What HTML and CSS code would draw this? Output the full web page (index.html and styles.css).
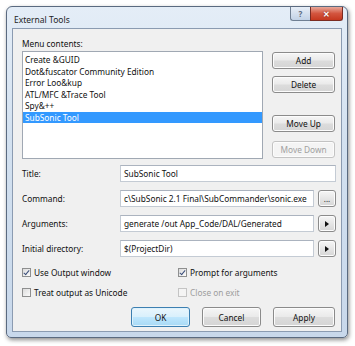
FILE: index.html
```html
<!DOCTYPE html>
<html>
<head>
<meta charset="utf-8">
<link rel="stylesheet" href="styles.css">
</head>
<body>
<div class="window">
  <div class="titlebar">
    <span class="title">External Tools</span>
    <div class="caption-btns">
      <span class="cb help">?</span>
      <span class="cb close">✕</span>
    </div>
  </div>
  <div class="client">
    <div class="label menu-label">Menu contents:</div>
    <div class="top">
      <div class="listbox">
        <div class="item">Create &amp;GUID</div>
        <div class="item">Dot&amp;fuscator Community Edition</div>
        <div class="item">Error Loo&amp;kup</div>
        <div class="item">ATL/MFC &amp;Trace Tool</div>
        <div class="item">Spy&amp;++</div>
        <div class="item selected">SubSonic Tool</div>
      </div>
      <div class="side">
        <button class="btn">Add</button>
        <button class="btn">Delete</button>
        <button class="btn move-up">Move Up</button>
        <button class="btn disabled">Move Down</button>
      </div>
    </div>
    <div class="form">
      <div class="label">Title:</div>
      <div class="field wide">SubSonic Tool</div>
      <div class="label">Command:</div>
      <div class="fieldrow"><div class="field">c\SubSonic 2.1 Final\SubCommander\sonic.exe</div><button class="sbtn">...</button></div>
      <div class="label">Arguments:</div>
      <div class="fieldrow"><div class="field">generate /out App_Code/DAL/Generated</div><button class="sbtn arrow"><span class="tri"></span></button></div>
      <div class="label">Initial directory:</div>
      <div class="fieldrow"><div class="field">$(ProjectDir)</div><button class="sbtn arrow"><span class="tri"></span></button></div>
    </div>
    <div class="checks">
      <label class="chk"><span class="box checked"></span>Use Output window</label>
      <label class="chk"><span class="box checked"></span>Prompt for arguments</label>
      <label class="chk"><span class="box"></span>Treat output as Unicode</label>
      <label class="chk disabled"><span class="box"></span>Close on exit</label>
    </div>
    <div class="bottom">
      <button class="btn dlg default">OK</button>
      <button class="btn dlg">Cancel</button>
      <button class="btn dlg apply">Apply</button>
    </div>
  </div>
</div>
</body>
</html>
```

FILE: styles.css
```css
html, body {
  margin: 0;
  padding: 0;
  background: #ffffff;
}
body {
  width: 355px;
  height: 346px;
  font-family: "Noto Sans", "Open Sans", sans-serif;
  font-size: 8.3px;
  color: #111;
}
.window {
  margin: 6px 0 0 6px;
  width: 342px;
  height: 332px;
  box-sizing: border-box;
  border: 1px solid #5a6a80;
  border-radius: 6px 6px 5px 5px;
  background: linear-gradient(180deg, #e4edf7 0%, #d3e1f0 40%, #c8d8eb 100%);
  box-shadow: 1px 2px 4px rgba(0,0,0,0.45);
  padding: 0 5px 5px 5px;
  display: flex;
  flex-direction: column;
}
.titlebar {
  height: 21px;
  display: flex;
  align-items: flex-start;
  justify-content: space-between;
}
.title {
  font-size: 8.5px;
  margin-top: 7px;
  margin-left: 2px;
  color: #1e1e1e;
}
.caption-btns {
  display: flex;
  margin-right: -1px;
}
.cb {
  height: 13px;
  display: flex;
  align-items: center;
  justify-content: center;
  font-size: 8px;
  font-weight: bold;
  color: #fff;
  border: 1px solid #6f7f93;
  border-top: none;
}
.help {
  width: 19px;
  border-radius: 0 0 0 3px;
  background: linear-gradient(180deg, #e7eef7, #c2d2e6);
  color: #5b6b80;
  border-right: none;
}
.close {
  width: 31px;
  border-radius: 0 0 3px 0;
  background: linear-gradient(180deg, #e9a99a 0%, #d3553f 50%, #c5381f 100%);
  border-color: #7a2b22;
  text-shadow: 0 0 2px #6a1a10;
}
.client {
  flex: 1;
  background: #f0f0f0;
  border: 1px solid #8b9bb1;
  padding: 9px 6px 0 9px;
  display: flex;
  flex-direction: column;
}
.label {
  color: #111;
}
.menu-label {
  height: 13px;
}
.top {
  display: flex;
  gap: 9px;
}
.listbox {
  width: 242px;
  height: 108px;
  box-sizing: border-box;
  background: #fff;
  border: 1px solid #a0a8b3;
  padding-top: 2px;
}
.item {
  height: 11.5px;
  line-height: 11.5px;
  padding-left: 2px;
}
.item.selected {
  background: #3399ff;
  color: #fff;
}
.side {
  display: flex;
  flex-direction: column;
  width: 63px;
  padding-top: 1px;
}
.btn {
  font-family: inherit;
  font-size: 8.3px;
  color: #111;
  height: 17px;
  padding: 0;
  border: 1px solid #8b8b8b;
  border-radius: 3px;
  background: linear-gradient(180deg, #f6f6f6 0%, #eaeaea 48%, #dcdcdc 52%, #d5d5d5 100%);
  box-shadow: inset 0 0 0 1px #fcfcfc;
}
.side .btn {
  margin-bottom: 7px;
}
.side .btn:last-child {
  margin-bottom: 0;
}
.side .move-up {
  margin-top: 15px;
  margin-bottom: 9px;
}
.btn.disabled {
  color: #a0a0a0;
  border-color: #c3c3c3;
  background: #f4f4f4;
}
.form {
  margin-top: 6px;
  display: grid;
  grid-template-columns: 98px 216px;
  grid-auto-rows: 17px;
  row-gap: 8px;
  align-items: center;
}
.field {
  height: 17px;
  box-sizing: border-box;
  background: #fff;
  border: 1px solid #c4cbd4;
  border-top-color: #abb3bf;
  padding: 0 3px;
  line-height: 15px;
  white-space: nowrap;
  overflow: hidden;
  flex: 1;
}
.fieldrow {
  display: flex;
  gap: 4px;
}
.sbtn {
  width: 18px;
  height: 17px;
  padding: 0;
  font-family: inherit;
  font-size: 8px;
  line-height: 8px;
  border: 1px solid #8b8b8b;
  border-radius: 3px;
  background: linear-gradient(180deg, #f6f6f6 0%, #e6e6e6 50%, #d6d6d6 100%);
  box-shadow: inset 0 0 0 1px #fcfcfc;
  display: flex;
  align-items: center;
  justify-content: center;
  color: #222;
}
.tri {
  width: 0;
  height: 0;
  border-left: 4px solid #111;
  border-top: 3px solid transparent;
  border-bottom: 3px solid transparent;
}
.checks {
  margin-top: 8px;
  display: grid;
  grid-template-columns: 156px 150px;
  grid-auto-rows: 14px;
  row-gap: 6px;
}
.chk {
  display: flex;
  align-items: center;
  gap: 3px;
  color: #111;
}
.chk.disabled {
  color: #9d9d9d;
}
.box {
  width: 9px;
  height: 9px;
  box-sizing: border-box;
  border: 1px solid #8e8f8f;
  background: linear-gradient(135deg, #dcdcdc, #fbfbfb);
  position: relative;
}
.chk.disabled .box {
  border-color: #c4c4c4;
  background: #f4f4f4;
}
.box.checked::after {
  content: "";
  position: absolute;
  left: 2px;
  top: 0px;
  width: 2px;
  height: 5px;
  border-right: 1.5px solid #3a4e7a;
  border-bottom: 1.5px solid #3a4e7a;
  transform: rotate(40deg);
}
.bottom {
  margin-top: 8px;
  display: flex;
  justify-content: flex-end;
  gap: 12px;
}
.dlg {
  width: 59px;
  height: 20px;
}
.apply {
  width: 62px;
}
.default {
  border-color: #3c7fb1;
  background: linear-gradient(180deg, #eaf6fd 0%, #d9f0fc 48%, #bee6fd 52%, #a7d9f5 100%);
  box-shadow: inset 0 0 0 1px #dff2fc;
}
```
